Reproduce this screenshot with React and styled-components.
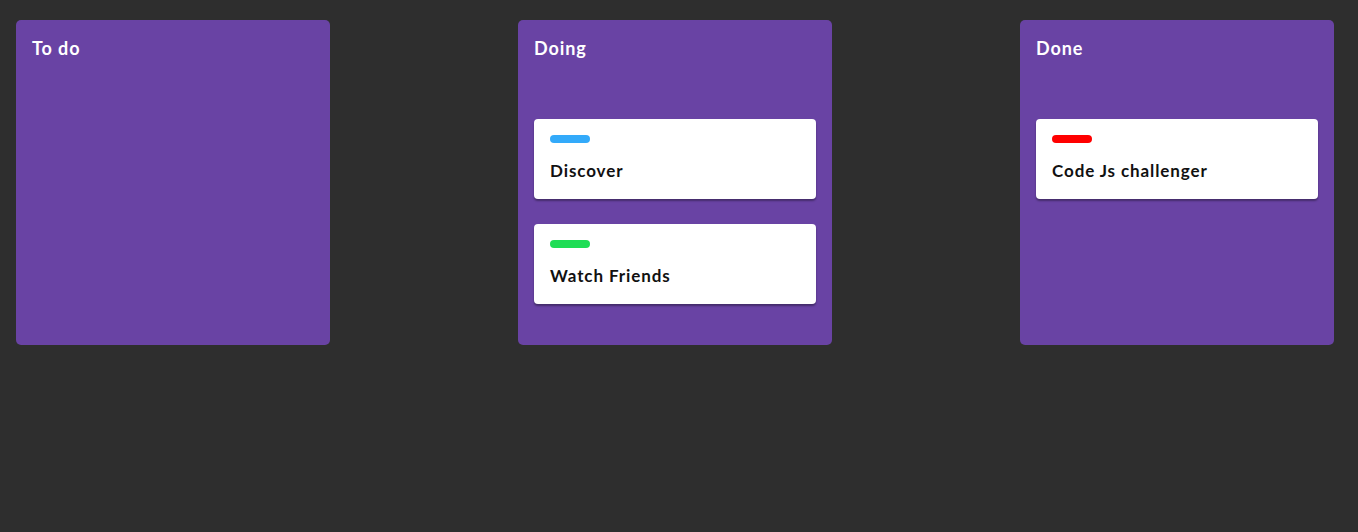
import React from "react";
import styled, { createGlobalStyle } from "styled-components";

const columns = [
  { title: "To do", cards: [] },
  {
    title: "Doing",
    cards: [
      { label: "Discover", color: "#33aafa" },
      { label: "Watch Friends", color: "#1fdd55" },
    ],
  },
  { title: "Done", cards: [{ label: "Code Js challenger", color: "#ff0000" }] },
];

const App = () => {
  return (
    <>
      <GlobalStyle />
      <Board>
        {columns.map((col) => (
          <Column key={col.title}>
            <Title>{col.title}</Title>
            <CardList>
              {col.cards.map((card) => (
                <Card key={card.label}>
                  <Tag color={card.color} />
                  <CardText>{card.label}</CardText>
                </Card>
              ))}
            </CardList>
          </Column>
        ))}
      </Board>
    </>
  );
};

const GlobalStyle = createGlobalStyle`
  html, body {
    margin: 0;
    padding: 0;
    background-color: #2e2e2e;
    font-family: "Lato", "Noto Sans", sans-serif;
  }
`;

const Board = styled.div`
  display: flex;
  justify-content: space-between;
  align-items: flex-start;
  padding: 20px 24px 0 16px;
  min-height: 512px;
`;

const Column = styled.div`
  box-sizing: border-box;
  width: 314px;
  min-height: 325px;
  padding: 16px;
  border-radius: 5px;
  background-color: #6943a4;
`;

const Title = styled.h3`
  margin: 0;
  height: 24px;
  line-height: 25px;
  font-size: 18px;
  font-weight: 700;
  letter-spacing: 0.9px;
  color: #ffffff;
`;

const CardList = styled.div`
  display: flex;
  flex-direction: column;
  gap: 25px;
  padding-top: 59px;
`;

const Card = styled.div`
  box-sizing: border-box;
  height: 80px;
  padding: 16px;
  border-radius: 4px;
  background-color: #ffffff;
  box-shadow: 0 2px 2px rgba(0, 0, 0, 0.35);
`;

const Tag = styled.div`
  width: 40px;
  height: 8px;
  border-radius: 4px;
  background-color: ${(props) => props.color};
`;

const CardText = styled.div`
  margin-top: 16px;
  line-height: 23px;
  font-size: 17px;
  font-weight: 700;
  letter-spacing: 0.9px;
  color: #111111;
`;

export default App;
